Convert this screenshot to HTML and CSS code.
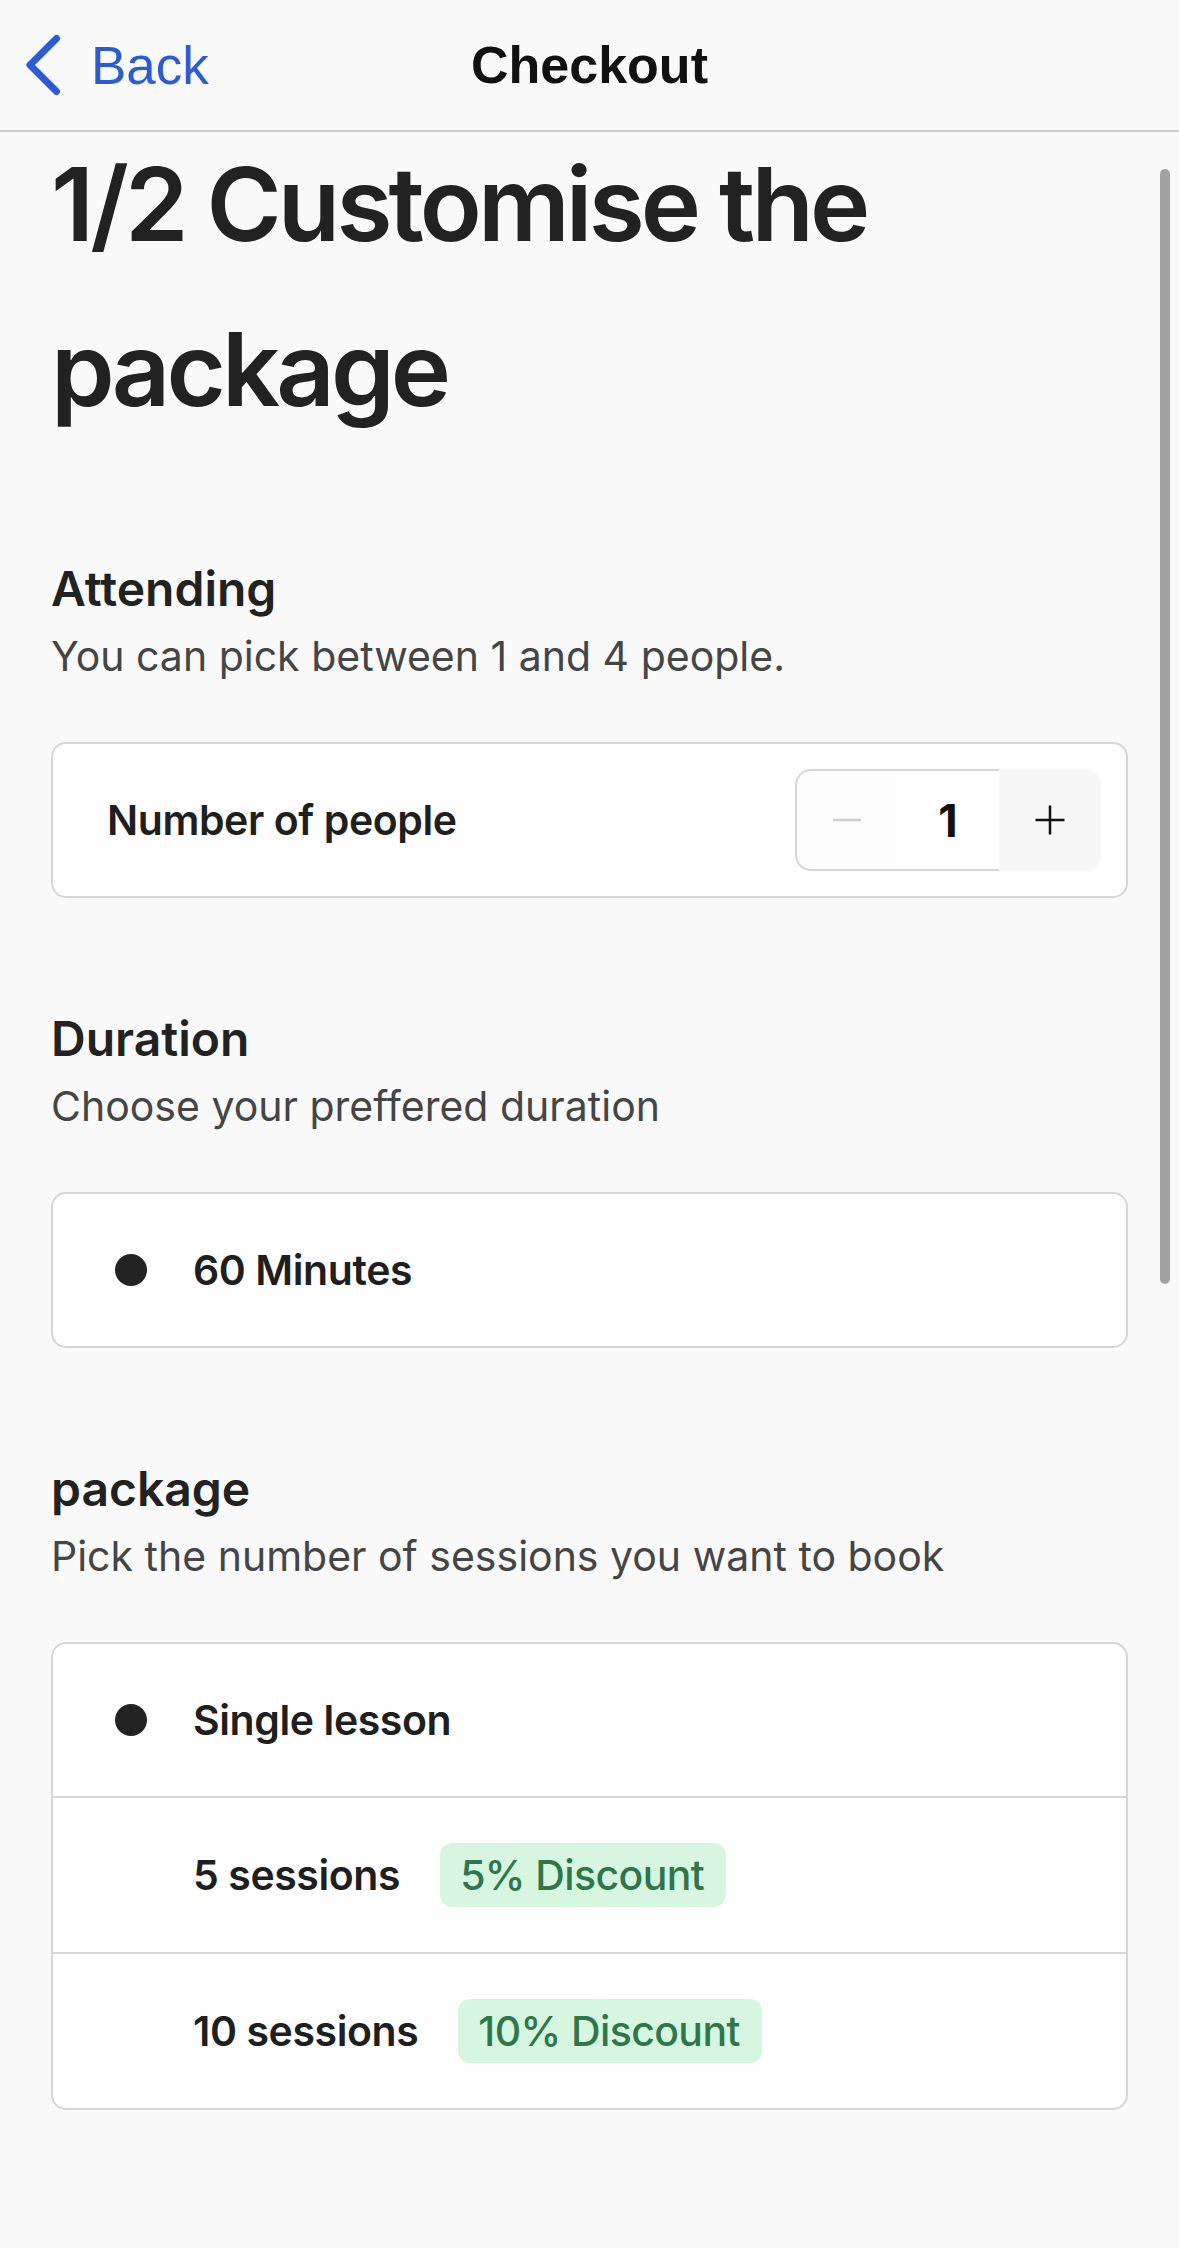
FILE: index.html
```html
<!DOCTYPE html>
<html lang="en">
<head>
<meta charset="utf-8">
<title>Checkout</title>
<link rel="stylesheet" href="styles.css">
</head>
<body>
<header class="nav">
  <div class="nav-left">
    <svg class="chev" width="40" height="64" viewBox="0 0 40 64" aria-hidden="true">
      <path d="M33.5 5.5 L7 32 L33.5 58.5" fill="none" stroke="#2c5bd6" stroke-width="7" stroke-linecap="round" stroke-linejoin="round"/>
    </svg>
    <span class="back">Back</span>
  </div>
  <div class="nav-title">Checkout</div>
  <div class="nav-right"></div>
</header>

<main class="content">
  <h1 class="title">1/2 Customise the package</h1>

  <section class="section">
    <h2 class="sec-title">Attending</h2>
    <p class="sec-sub">You can pick between 1 and 4 people.</p>
    <div class="card">
      <div class="row row-plain">
        <span class="label">Number of people</span>
        <div class="stepper">
          <div class="step step-minus">
            <svg width="30" height="4" viewBox="0 0 30 4"><line x1="1" y1="2" x2="29" y2="2" stroke="#cfcfcf" stroke-width="2.5"/></svg>
          </div>
          <div class="step step-value">1</div>
          <div class="step step-plus">
            <svg width="32" height="32" viewBox="0 0 32 32"><line x1="1.5" y1="16" x2="30.5" y2="16" stroke="#111" stroke-width="2.5"/><line x1="16" y1="1.5" x2="16" y2="30.5" stroke="#111" stroke-width="2.5"/></svg>
          </div>
        </div>
      </div>
    </div>
  </section>

  <section class="section">
    <h2 class="sec-title">Duration</h2>
    <p class="sec-sub">Choose your preffered duration</p>
    <div class="card">
      <div class="row row-radio">
        <span class="dot"></span>
        <span class="label">60 Minutes</span>
      </div>
    </div>
  </section>

  <section class="section">
    <h2 class="sec-title">package</h2>
    <p class="sec-sub">Pick the number of sessions you want to book</p>
    <div class="card">
      <div class="row row-radio">
        <span class="dot"></span>
        <span class="label">Single lesson</span>
      </div>
      <div class="row row-radio">
        <span class="dot dot-empty"></span>
        <span class="label">5 sessions</span>
        <span class="badge">5% Discount</span>
      </div>
      <div class="row row-radio">
        <span class="dot dot-empty"></span>
        <span class="label">10 sessions</span>
        <span class="badge">10% Discount</span>
      </div>
    </div>
  </section>
</main>

<div class="scrollbar"></div>
</body>
</html>
```

FILE: styles.css
```css
* {
  box-sizing: border-box;
}

html, body {
  margin: 0;
  padding: 0;
  background: #f9f9f9;
}

body {
  font-family: Inter, "Noto Sans", "Liberation Sans", sans-serif;
  color: #222222;
  min-height: 2248px;
}

/* Navigation bar */
.nav {
  height: 132px;
  display: grid;
  grid-template-columns: 1fr auto 1fr;
  align-items: center;
  border-bottom: 2px solid #cccccc;
  background: #f9f9f9;
  font-family: "Liberation Sans", Arial, sans-serif;
  position: relative;
  z-index: 2;
}

.nav-left {
  display: flex;
  align-items: center;
  padding-left: 23px;
}

.chev {
  display: block;
  margin-right: 28px;
}

.back {
  font-size: 53px;
  color: #2c5bd6;
  line-height: 1;
}

.nav-title {
  font-size: 52px;
  font-weight: 700;
  color: #111111;
  line-height: 1;
}

/* Content */
.content {
  padding: 0 51px;
}

.title {
  margin: -10px 0 0 0;
  font-size: 102px;
  line-height: 165px;
  font-weight: 600;
  letter-spacing: -0.038em;
  color: #222222;
}

.section {
  margin-top: 108px;
}

.section + .section {
  margin-top: 112px;
}

.sec-title {
  margin: 0;
  font-size: 48px;
  line-height: 58px;
  font-weight: 600;
  letter-spacing: 0;
  color: #222222;
}

.sec-sub {
  margin: 14px 0 0 0;
  font-size: 41px;
  line-height: 49px;
  font-weight: 400;
  letter-spacing: 0;
  color: #454545;
}

.card {
  margin-top: 61px;
  background: #fefefe;
  border: 2px solid #d6d6d6;
  border-radius: 15px;
  overflow: hidden;
}

.row {
  min-height: 152px;
  display: flex;
  align-items: center;
}

.row + .row {
  min-height: 156px;
  border-top: 2px solid #d6d6d6;
}

.row-plain {
  padding: 0 25px 0 54px;
  justify-content: space-between;
}

.row-radio {
  padding-left: 62px;
}

.label {
  font-size: 41px;
  font-weight: 600;
  letter-spacing: -0.01em;
  color: #1f1f1f;
}

.dot {
  width: 32px;
  height: 32px;
  border-radius: 50%;
  background: #232323;
  margin-right: 46px;
  flex: none;
}

.dot-empty {
  visibility: hidden;
}

.badge {
  margin-left: 40px;
  height: 64px;
  padding: 0 22px 0 20px;
  display: inline-flex;
  align-items: center;
  border-radius: 12px;
  background: #d7f6e0;
  color: #2e774b;
  font-size: 41px;
  font-weight: 500;
  letter-spacing: -0.015em;
}

/* Stepper */
.stepper {
  display: flex;
  height: 102px;
}

.step {
  width: 102px;
  height: 102px;
  display: flex;
  align-items: center;
  justify-content: center;
}

.step svg {
  display: block;
}

.step-minus {
  border: 2px solid #d6d6d6;
  border-right: none;
  border-radius: 16px 0 0 16px;
  background: #fdfdfd;
}

.step-value {
  border-top: 2px solid #d6d6d6;
  border-bottom: 2px solid #d6d6d6;
  background: #ffffff;
  font-size: 45px;
  font-weight: 700;
  color: #111111;
}

.step-plus {
  background: #f6f6f6;
  border-radius: 0 16px 16px 0;
}

/* Overlay scrollbar */
.scrollbar {
  position: absolute;
  left: 1160px;
  top: 169px;
  width: 10px;
  height: 1115px;
  border-radius: 5px;
  background: #a1a1a1;
}
```
